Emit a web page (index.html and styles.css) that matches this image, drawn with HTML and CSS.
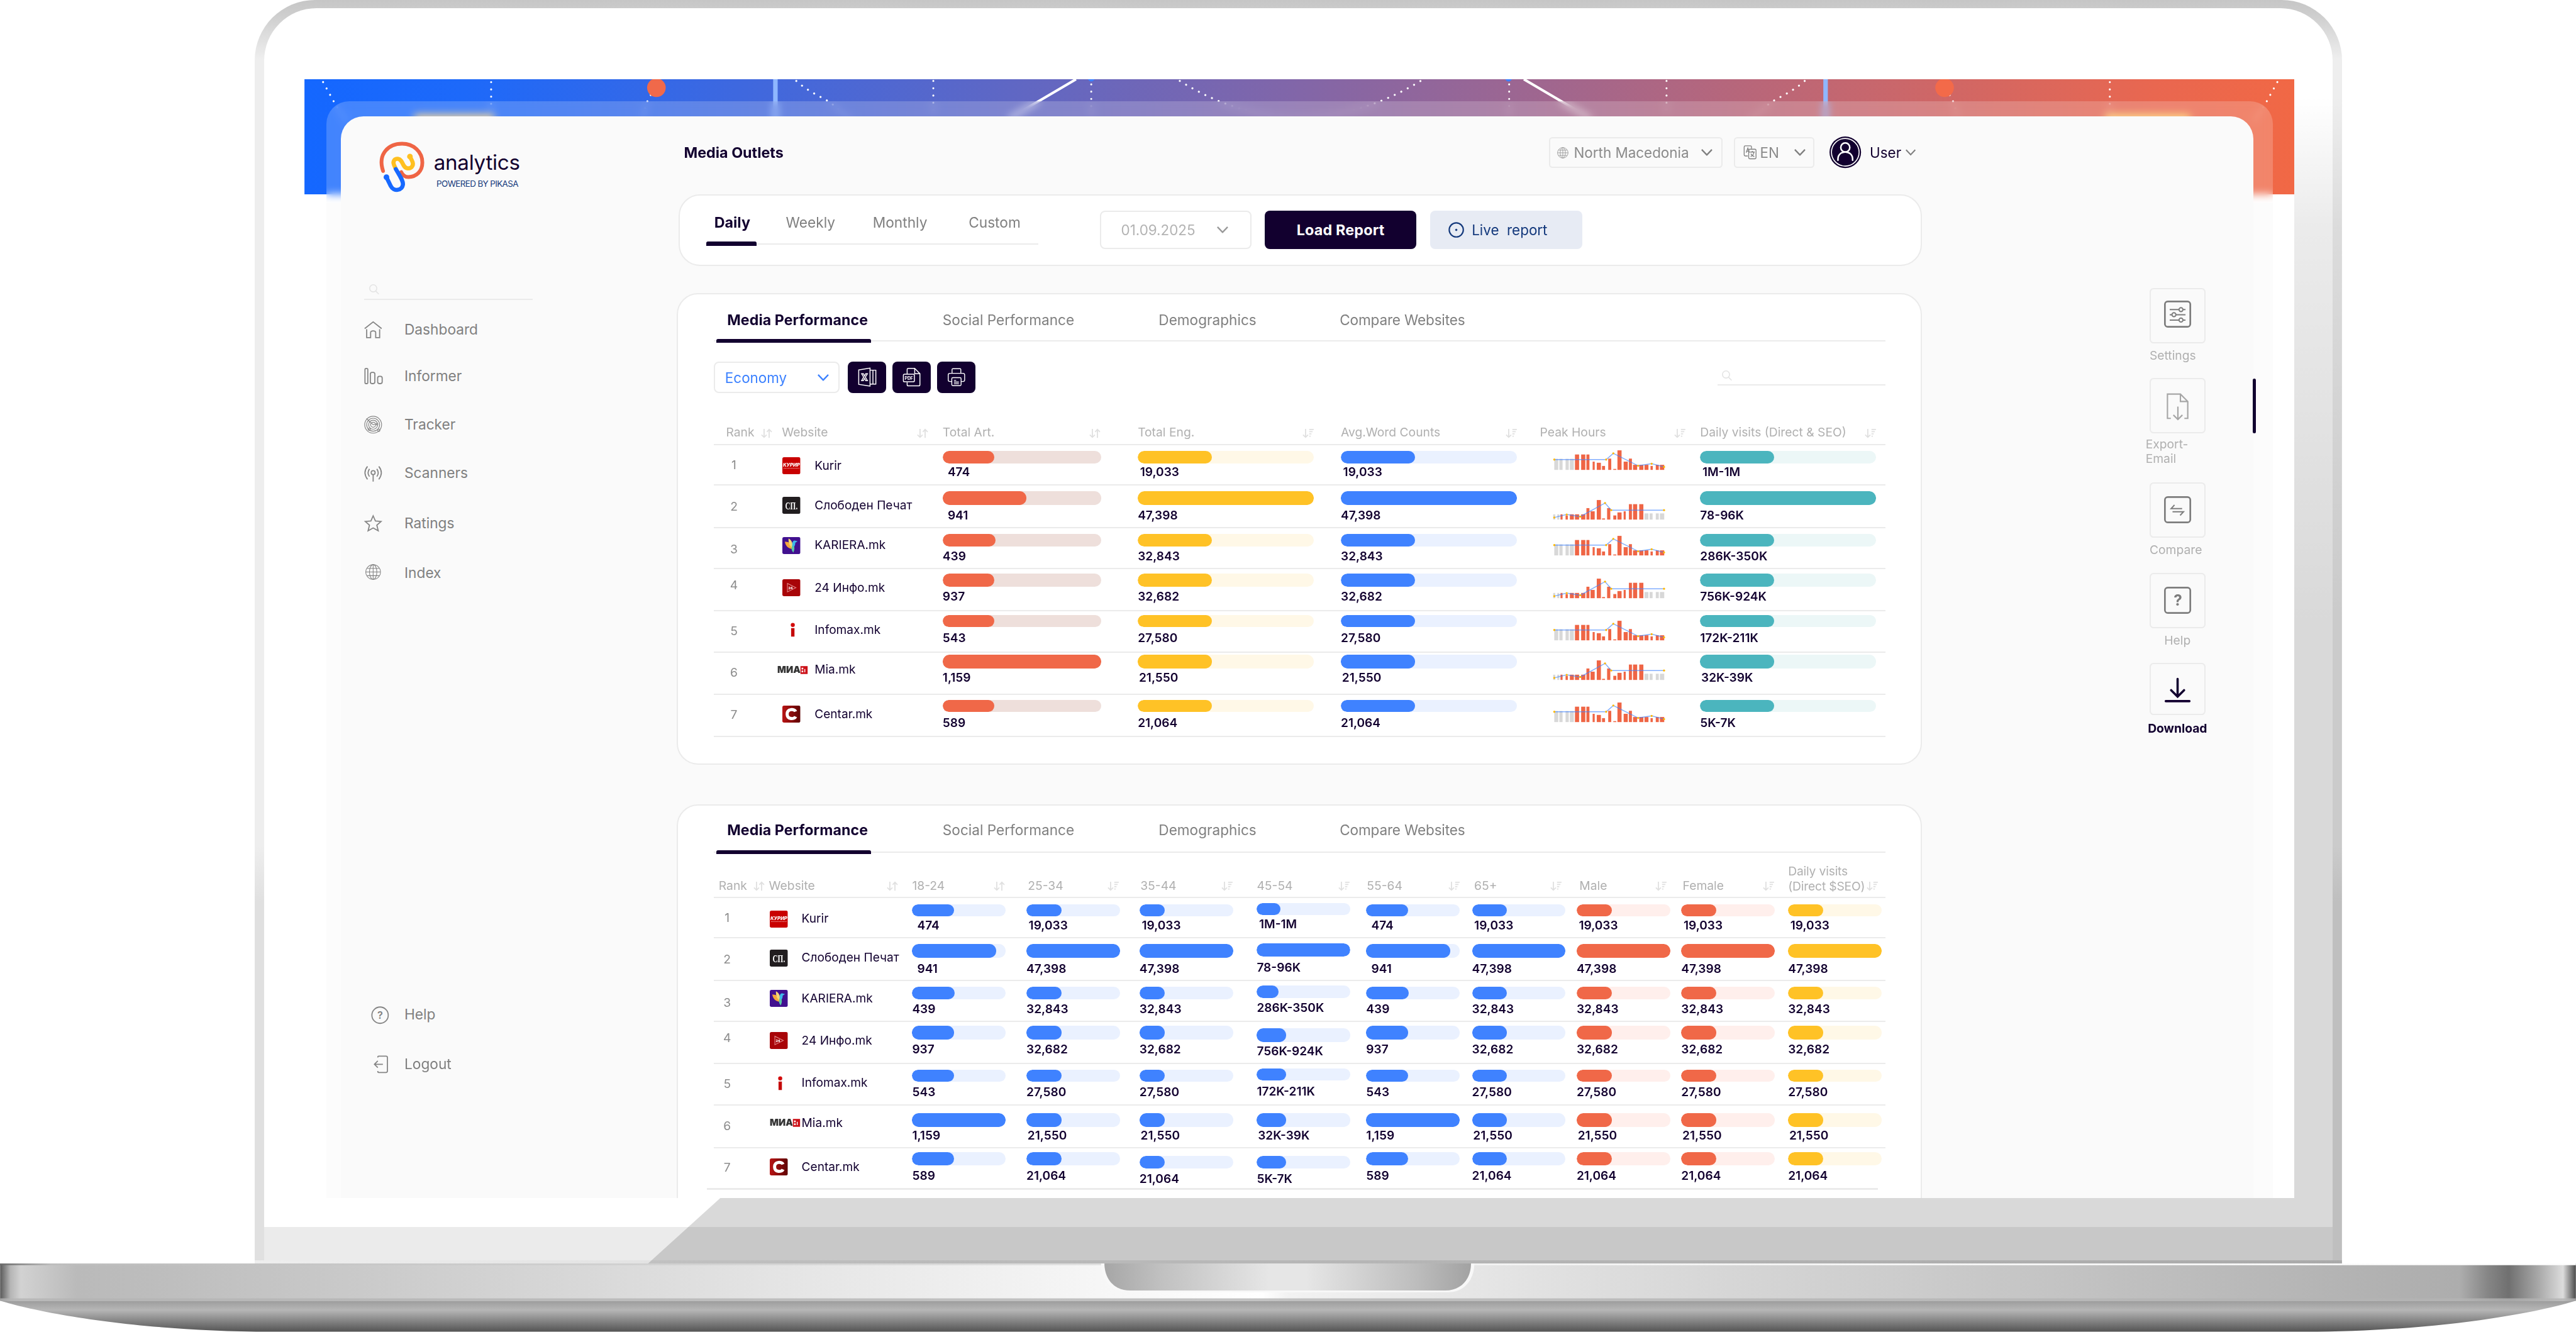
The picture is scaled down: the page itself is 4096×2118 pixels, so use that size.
FILE: index.html
```html
<!DOCTYPE html>
<html lang="en">
<head>
<meta charset="utf-8">
<title>Analytics – Media Outlets</title>
<link rel="stylesheet" href="styles.css">
</head>
<body>
<svg class="defs" aria-hidden="true">
  <defs>
    <linearGradient id="cgrad" x1="0" x2="1"><stop offset="0" stop-color="#b81414"/><stop offset="1" stop-color="#5e0404"/></linearGradient>
  </defs>
  <symbol id="sort" viewBox="0 0 20 18"><path d="M5.5 1v15M1 11.5 5.5 16 10 11.500M14.500 17V2M10.500 6.500 14.500 2 19 6.500"/></symbol>
  <symbol id="sort-desc" viewBox="0 0 20 18"><path d="M5.500 1v15M1 11.500 5.500 16 10 11.500M12 2h8M12 6h6M12 10h4M12 14h2.500"/></symbol>
  <symbol id="chev" viewBox="0 0 20 12"><path d="M1 1l9 9.500L19 1"/></symbol>
  <symbol id="search" viewBox="0 0 20 20"><circle cx="8" cy="8" r="7"/><path d="M13 13.500 19 19.500"/></symbol>
  <symbol id="globe" viewBox="0 0 30 30"><circle cx="15" cy="15" r="14"/><ellipse cx="15" cy="15" rx="7" ry="14"/><path d="M15 1v28M1 15h28M3.500 8h23M3.500 22h23"/></symbol>
  <symbol id="kurir" viewBox="0 0 32 30"><rect width="32" height="30" rx="3" fill="#c90000"/><text x="16" y="16.500" textLength="30" lengthAdjust="spacingAndGlyphs" class="lt-kurir">КУРИР</text><path d="M2 19.500h28" stroke="#e88f8f" stroke-width="1.200" stroke-dasharray="2 .7"/></symbol>
  <symbol id="pecat" viewBox="0 0 32 30"><rect width="32" height="30" rx="3" fill="#211d1f"/><text x="16" y="22" textLength="22" lengthAdjust="spacingAndGlyphs" class="lt-pecat">СП.</text></symbol>
  <symbol id="kariera" viewBox="0 0 32 30"><rect width="32" height="30" rx="3" fill="#41108f"/><path d="M4.500 8l6 1 6 6 1 6c-7-1-12-5-13-13z" fill="#f5a83d"/><path d="M11 2.500c4 2 7 6 7.500 13l-2 3c-4-4-6-9-5.500-16z" fill="#f7d774"/><path d="M17.500 11c1-4 3-5.500 5.500-4.500l4 1-4 2.500c0 5-2 8-5.500 10z" fill="#3fb8e8"/><path d="M17 15l4 2c1 4 0 7-1.500 10.500C17 25 16 22 16.500 19z" fill="#57c7a5"/></symbol>
  <symbol id="info24" viewBox="0 0 32 30"><rect width="32" height="30" rx="3" fill="#a80508"/><path d="M9 7.500v15L24 15z" fill="none" stroke="#e58a8a" stroke-width="1.200"/><text x="14.500" y="17.500" class="lt-24">24</text></symbol>
  <symbol id="infomax" viewBox="0 0 32 30"><circle cx="18.500" cy="6.500" r="3.600" fill="#d30b0b"/><path d="M15.500 12h6v15h-6z" fill="#c50909"/></symbol>
  <symbol id="mia" viewBox="0 0 54 30"><text x="0" y="20.500" textLength="41" lengthAdjust="spacingAndGlyphs" class="lt-mia">МИА</text><rect x="41" y="8" width="13" height="14" fill="#cc1118"/><path d="M43 11h3v3h-3zM43 16h3v3h-3zM48 13h1.500v6H48z" fill="#fff"/></symbol>
  <symbol id="centar" viewBox="0 0 32 30"><rect width="32" height="30" rx="3" fill="url(#cgrad)"/><path d="M23.500 10.500c-2-5-15-5.500-15 4.500s13 9.500 15 4.500" fill="none" stroke="#fff" stroke-width="5.500"/></symbol>
</svg>

<div class="stage">
  <div class="lid">
    <div class="lid-face"><div class="chin"></div></div>
    <div class="hinge"></div>
    <div class="shade"></div>
  </div>

  <div class="screen">
    <svg class="band" viewBox="540 140 3528 205">
      <defs><linearGradient id="bandg" x1="0" x2="1"><stop offset="0" stop-color="#1467ff"/><stop offset=".08" stop-color="#1d69fa"/><stop offset=".5" stop-color="#8266a8"/><stop offset=".93" stop-color="#e96750"/><stop offset="1" stop-color="#f16845"/></linearGradient></defs>
      <rect x="540" y="140" width="3528" height="205" fill="url(#bandg)"/>
      <g stroke="#8fb7ff" stroke-width="8"><path d="M1375 140v205M3237 140v205"/></g>
      <g stroke="#fff" stroke-width="4.500" fill="none"><path d="M1908 140 1789 210M2702 140l119 70"/></g>
      <g class="dots">
        <path d="M573 145l22 40 20 30"/><path d="M871 145v60"/><path d="M1154 168c-6 9-10 20-14 42"/>
        <path d="M1412 143c20 18 40 26 60 38l40 34"/><path d="M1655 143v62"/><path d="M1935 149v56"/>
        <path d="M2092 143q105 65 212 65t215-65"/><path d="M2676 149v56"/><path d="M2955 143v62"/>
        <path d="M3200 143c-20 18-40 26-60 38l-40 34"/><path d="M3457 168c6 9 10 20 14 42"/><path d="M3741 145v60"/><path d="M4038 145l-22 40-20 30"/>
      </g>
      <circle cx="1935" cy="138" r="6" fill="#3d82ff"/><circle cx="2675" cy="138" r="6" fill="#3d82ff"/>
      <circle cx="1164" cy="155" r="16.500" fill="#f0694a"/><circle cx="3448" cy="155" r="16.500" fill="#f36a49"/>
      <rect x="735" y="202" width="141" height="24" fill="#e8c98a"/><rect x="3733" y="202" width="150" height="24" fill="#ffcf6a"/>
    </svg>
    <div class="glass"></div>

    <div class="app">
      <aside class="sidebar">
        <div class="brand">
          <svg class="brand-mark" viewBox="42 48 240 276">
            <path d="M59 205C28 110 92 60 160 60c62 0 108 43 108 100 0 46-32 77-74 77q-26 0-38-26" class="ring"/>
            <path d="M125 190l-8-18c-8-20 4-34 21-32 30 5 22 50 54 51 23 0 32-21 21-41l-11-22" class="squig"/><circle cx="202" cy="128" r="15" fill="#ffc020"/>
            <path d="M77 238l23 47c15 30 62 27 65-10 0-20-12-36-38-80" class="hook"/><circle cx="77" cy="238" r="15" fill="#1769ff"/>
          </svg>
          <div class="brand-text"><div class="brand-name">analytics</div><div class="brand-sub">POWERED BY PIKASA</div></div>
        </div>
        <div class="side-search"><svg class="ic-search"><use href="#search"/></svg></div>
        <nav class="side-nav">
          <a><svg viewBox="0 0 32 32"><path d="M1 14 16 2l15 12M4.500 15v15h7V21q0-3 4.500-3t4.500 3v9h7V15"/></svg>Dashboard</a>
          <a><svg viewBox="0 0 32 32"><rect x="1.500" y="2" width="5" height="27" rx="2"/><rect x="11" y="9" width="8" height="20" rx="3"/><rect x="24" y="16" width="8" height="13" rx="3"/></svg>Informer</a>
          <a><svg viewBox="0 0 32 32" class="thin"><circle cx="16" cy="16" r="15"/><circle cx="16" cy="16" r="11.500"/><circle cx="16" cy="16" r="8"/><circle cx="16" cy="16" r="4.500"/><path d="M4 5l12 11 4-1"/><circle cx="9" cy="24" r="2"/><circle cx="26" cy="26" r="2"/><circle cx="23" cy="15" r="1.500"/></svg>Tracker</a>
          <a><svg viewBox="0 0 32 32"><circle cx="16" cy="15" r="3.500"/><path d="M16 19v12M9.500 8.500q-5 7 0 13.500M22.500 8.500q5 7 0 13.500M6 4q-9 11 0 23M26 4q9 11 0 23"/></svg>Scanners</a>
          <a><svg viewBox="0 0 32 32"><path d="M16 2.500l4 9 10 1-7.500 6.500 2.500 10-9-5-9 5 2.500-10L2 12.500l10-1z"/></svg>Ratings</a>
          <a><svg viewBox="-1 0 32 32" class="thin"><use href="#globe" width="28" height="28" x="1" y="0"/></svg>Index</a>
        </nav>
        <nav class="side-foot">
          <a><svg viewBox="0 0 32 32"><circle cx="16" cy="17" r="14.500"/><text x="16" y="23.500" class="q">?</text></svg>Help</a>
          <a><svg viewBox="0 0 32 32"><path d="M12 4V3q0-1.500 1.500-1.500h13Q29 1.500 29 4v24q0 2.500-2.500 2.500h-13Q12 30.500 12 29v-1M6 16h15M12 10l-6 6 6 6"/></svg>Logout</a>
        </nav>
      </aside>

      <main class="main">
        <header class="topbar">
          <h1>Media Outlets</h1>
          <div class="pick pick-country"><svg class="g"><use href="#globe"/></svg><span>North Macedonia</span><svg class="chev"><use href="#chev"/></svg></div>
          <div class="pick pick-lang"><svg class="lang" viewBox="0 0 24 26"><path d="M1.500 3q0-2 2-2h9q2 0 2 2v3M8 19H3.500q-2 0-2-2V3M5 13l3-8 3 8M6 10.500h4"/><rect x="9.500" y="7" width="13" height="17" rx="2"/><path d="M12 12h8M16 10v2M19 12q-1 6-6 8M13.500 15q2 4 6 5"/></svg><span>EN</span><svg class="chev"><use href="#chev"/></svg></div>
          <svg class="avatar" viewBox="0 0 56 56"><circle cx="28" cy="28" r="28" fill="#12002f"/><circle cx="28" cy="28" r="24.500" fill="none" stroke="#fff" stroke-width="1.800"/><circle cx="28" cy="19.500" r="8" class="ln"/><path d="M15 42v-2c0-8 6-12.500 13-12.500S41 32 41 40v2" class="ln"/></svg>
          <span class="user">User</span><svg class="chev chev-user"><use href="#chev"/></svg>
        </header>

        <section class="filters">
          <nav class="periods"><b>Daily</b><span>Weekly</span><span>Monthly</span><span>Custom</span></nav>
          <div class="date"><span>01.09.2025</span><svg class="chev"><use href="#chev"/></svg></div>
          <button class="load">Load Report</button>
          <button class="live"><svg viewBox="0 0 28 28"><circle cx="14" cy="14" r="12.500"/><circle cx="14" cy="14" r="1.500" class="pt"/></svg>Live&nbsp; report</button>
        </section>

        <section class="card performance">
          <nav class="tabs"><b>Media Performance</b><span>Social Performance</span><span>Demographics</span><span>Compare Websites</span></nav>
          <div class="toolbar">
            <div class="topic"><span>Economy</span><svg class="chev"><use href="#chev"/></svg></div>
            <button class="tool"><svg viewBox="0 0 32 34"><path d="M1.500 4.500 21 1.500v31L1.500 29.500zM21 5h10v24H21M26 5v24"/><path d="M6.500 11h3l2 4 2-4h3l-3.500 6 3.500 6h-3l-2-4-2 4h-3l3.500-6z"/></svg></button>
            <button class="tool"><svg viewBox="0 0 32 34"><path d="M8 12V4q0-2 2-2h11l9 9v19q0 2-2 2H10q-2 0-2-2v-4M21 2v9h9"/><rect x="1.500" y="12" width="19" height="13" rx="2" fill="#12002f"/><text x="11" y="21.500" class="pdf">PDF</text></svg></button>
            <button class="tool"><svg viewBox="0 0 34 34"><path d="M9 10V3q0-1.500 1.500-1.500h13Q25 1.500 25 3v7M8.500 25H5q-3 0-3-3v-9q0-3 3-3h24q3 0 3 3v9q0 3-3 3h-3.500"/><rect x="8.500" y="18" width="17" height="14.500" rx="2"/><path d="M12.500 23h4M12.500 26h9M12.500 29h9"/></svg></button>
            <div class="table-search"><svg class="ic-search"><use href="#search"/></svg></div>
          </div>
          <div class="table" id="performance"></div>
        </section>

        <section class="card demographics">
          <nav class="tabs"><b>Media Performance</b><span>Social Performance</span><span>Demographics</span><span>Compare Websites</span></nav>
          <div class="table" id="demographics"></div>
        </section>
      </main>

      <aside class="rail">
        <div class="act"><i><svg viewBox="0 0 48 48"><rect x="1.500" y="1.500" width="45" height="45" rx="5" class="fr"/><path d="M10 16h16M34 16h4M10 25h4M21 25h17M10 34.500h16M34 34.500h4" class="fr2"/><circle cx="30" cy="16" r="3.500" class="fr2"/><circle cx="17.500" cy="25" r="3.500" class="fr2"/><circle cx="30" cy="34.500" r="3.500" class="fr2"/></svg></i>Settings</div>
        <div class="act exp"><i><svg viewBox="0 0 48 48"><path d="M12 46H6V3h23l13 13v30h-6M29 3v13h13M24.500 25v23M16.500 40l8 8 8-8" class="dl"/></svg></i>Export-<br>Email</div>
        <div class="act"><i><svg viewBox="0 0 48 48"><rect x="1.500" y="1.500" width="45" height="45" rx="5" class="fr"/><path d="M32 22H12.500l6-6.500M15 27.500h19.500l-6 6.500" class="fr2"/></svg></i>Compare</div>
        <div class="act mid"><i><svg viewBox="0 0 48 48"><rect x="1.500" y="1.500" width="45" height="45" rx="5" class="fr"/><text x="24.500" y="34" class="qq">?</text></svg></i>Help</div>
        <div class="act mid on"><i><svg viewBox="0 0 48 48"><path d="M24 5v31M12.500 25 24 36.500 35.500 25M3 44.500h42" class="dk"/></svg></i>Download</div>
        <div class="marker"></div>
      </aside>
    </div>
  </div>

  <svg class="base" viewBox="0 0 4567 122">
    <defs>
      <linearGradient id="deck" x1="0" x2="1"><stop offset="0" stop-color="#5a5a5a"/><stop offset=".004" stop-color="#b5b5b5"/><stop offset=".008" stop-color="#d2d2d2"/><stop offset=".03" stop-color="#bababa"/><stop offset=".06" stop-color="#bdbdbd"/><stop offset=".3" stop-color="#e4e4e4"/><stop offset=".49" stop-color="#fff"/><stop offset=".5" stop-color="#f2f2f2"/><stop offset=".63" stop-color="#dcdcdc"/><stop offset=".955" stop-color="#adadad"/><stop offset=".966" stop-color="#858585"/><stop offset=".974" stop-color="#707070"/><stop offset=".985" stop-color="#a6a6a6"/><stop offset=".995" stop-color="#dcdcdc"/><stop offset="1" stop-color="#4a4a4a"/></linearGradient>
      <linearGradient id="under" x2="0" y2="1"><stop offset="0" stop-color="#9c9c9c"/><stop offset=".3" stop-color="#b6b6b6"/><stop offset=".65" stop-color="#858585"/><stop offset="1" stop-color="#545454"/></linearGradient>
      <linearGradient id="notch" x1="0" x2="1"><stop offset="0" stop-color="#a6a6a6"/><stop offset=".15" stop-color="#c0c0c0"/><stop offset=".45" stop-color="#e6e6e6"/><stop offset=".55" stop-color="#e6e6e6"/><stop offset=".85" stop-color="#bdbdbd"/><stop offset="1" stop-color="#a2a2a2"/></linearGradient>
      <linearGradient id="lip" x1="0" x2="1"><stop offset="0" stop-color="#6b6b6b"/><stop offset=".02" stop-color="#bdbdbd"/><stop offset=".42" stop-color="#dedede"/><stop offset=".58" stop-color="#f4f4f4"/><stop offset="1" stop-color="#fdfdfd"/></linearGradient>
    </defs>
    <path d="M0 66C70 88 250 121 480 121H4087C4317 121 4497 88 4567 66z" fill="url(#under)"/>
    <path d="M0 0h4567v66H0z" fill="url(#deck)"/>
    <path d="M0 0h4567v3H0z" fill="url(#lip)"/>
    <path d="M0 62h4567v4H0z" fill="#b4b4b4" opacity=".8"/>
    <path d="M1952 0h662c0 26-16 51-46 51H1998c-30 0-46-25-46-51z" fill="#f8f8f8"/>
    <path d="M1958 0h650c0 24-14 48-46 48H2004c-32 0-46-24-46-48z" fill="url(#notch)"/>
  </svg>
</div>
<script src="tables.js"></script>
</body>
</html>
```
FILE: styles.css
```css
*{box-sizing:border-box}
html,body{margin:0;height:100%;overflow:hidden;background:#fff}
body{font-family:Inter,"Noto Sans",sans-serif;color:#12002f}
h1,button{margin:0;padding:0;border:0;font:inherit}
svg{display:block;fill:none;overflow:visible;flex:none}
.defs{position:absolute;width:0;height:0;overflow:hidden}

/* laptop */
.stage{position:relative;width:4567px;height:2362px;zoom:.896869;overflow:hidden}
.lid{position:absolute;left:452px;top:0;width:3700px;height:2240px;border-radius:107px 107px 0 0;overflow:hidden;background:linear-gradient(#c6c6c6,#cdcdcd 25px,#dcdcdc 60px,#eee 105px,#eee 1500px,#e0e0e0 1600px)}
.lid-face{margin:14.5px 16px 0;height:2219.5px;border-radius:93px 93px 0 0;background:#fff;display:flex;flex-direction:column;justify-content:flex-end;overflow:hidden}
.chin{height:59px;background:#ebebeb}
.hinge{height:6px;background:linear-gradient(90deg,#eee,#dcdcdc 30%,#c8c8c8)}
.shade{position:absolute;inset:0;clip-path:polygon(697px 2240px,825px 2124px,3169px 0,3700px 0,3700px 2240px);background:linear-gradient(transparent 170px,rgba(0,0,0,.08) 400px,rgba(0,0,0,.15) 1100px)}
.base{position:absolute;left:0;top:2240px;width:4567px;height:122px}

/* screen */
.screen{position:absolute;left:540px;top:140px;width:3528px;height:1984px;background:#fff;overflow:hidden}
.band{position:absolute;left:0;top:0;width:3528px;height:205px;overflow:hidden}
.dots path{stroke:#fff;stroke-width:3.5;stroke-linecap:round;stroke-dasharray:.1 12.8}
.glass{position:absolute;left:38.5px;top:40px;width:3451px;height:2000px;border-radius:40px 40px 0 0;background:rgba(250,250,250,.2);backdrop-filter:blur(7px)}
.glass::after{content:"";position:absolute;inset:180px 0 0;background:#fcfcfc}
.app{position:relative;margin:66px 0 0 64px;width:3391px;height:1930px;border-radius:40px 40px 0 0;background:#fafafa;display:grid;grid-template-columns:595.600px 2207.400px 1fr}

/* sidebar */
.sidebar{padding:45px 0 0 42px}
.brand{display:flex;height:92px;margin-left:28px}
.brand-mark{width:80px;height:92px}
.ring,.squig,.hook{stroke-width:20;stroke-linecap:round}
.ring{stroke:#ef6545}.squig{stroke:#ffc020}.hook{stroke:#1769ff}
.squig,.hook{stroke-width:22}
.brand-text{margin:18px 0 0 15px}
.brand-name{font-size:37px;line-height:40px;letter-spacing:-.3px}
.brand-sub{font-size:15px;line-height:18px;margin:8px 0 0 5px;color:#14397c;letter-spacing:-.7px;white-space:nowrap}
.side-search,.table-search{width:298px;height:31px;border-bottom:3px solid #ebebeb}
.side-search{margin-top:157.500px;padding:3px 8px}
.ic-search{width:18px;height:18px;stroke:#e4e4e4;stroke-width:2}
.side-nav{display:grid;grid-template-rows:82px 86.500px 86px 89px 87.600px 30px;margin-top:38.500px}
.side-nav a,.side-foot a{display:flex;align-items:center;height:30px;gap:39px;font-size:25.300px;line-height:30px;color:#808080}
.side-nav svg,.side-foot svg{width:32px;height:32px;stroke:#858585;stroke-width:2}
.side-nav svg.thin{stroke-width:1.300}
.side-foot{margin-top:753px;display:grid;grid-template-rows:88px 30px}
.side-foot a{padding-left:12px;gap:27px}
.q{font:600 18px Inter,sans-serif;fill:#808080;stroke:none;text-anchor:middle}

/* header */
.topbar{height:129px;margin-bottom:10px;display:flex;align-items:center;padding:0 11px 0 13px}
h1{font-size:26px;font-weight:700;flex:1}
.pick{display:flex;align-items:center;height:55px;border:3px solid #ebebeb;border-radius:6px;font-size:25px;color:#8a8a8a}
.pick-country{width:308px;padding:0 16px 0 13px}
.pick-country .g{width:20px;height:20px;stroke:#999;stroke-width:1.500}
.pick-country span{flex:1;margin-left:9px}
.pick-lang{width:143px;margin-left:20px;padding:0 14px}
.pick-lang span{flex:1;margin-left:6px}
.lang{width:24px;height:26px;stroke:#808080;stroke-width:1.500}
.chev{width:20px;height:12px;stroke:#808080;stroke-width:2.600}
.avatar{width:56px;height:56px;margin-left:26px}
.ln{stroke:#fff;stroke-width:2.800;stroke-linecap:round}
.user{width:54px;margin:0 9px 0 16px;font-size:25px}
.chev-user{width:18px}

/* filters */
.filters{height:127px;margin-left:3px;border:3px solid #ebebeb;border-radius:38px;background:#fff;display:flex;padding:26.500px 0 0 47.500px}
.periods{width:589px;height:60px;border-bottom:3px solid #ebebeb;display:grid;grid-template-columns:141px 154px 170px auto;font-size:25.300px;line-height:30px;color:#808080;padding-top:6px;position:relative}
.periods b,.tabs b{color:#12002f}
.periods b{padding-left:14px;font-size:26px}
.periods b::after{content:"";position:absolute;left:0;bottom:-4px;width:89px;height:7px;border-radius:3px 3px 0 0;background:#12002f}
.filters>.date,.filters>button{height:68px;border-radius:9px;font-size:25px}
.date{width:269px;margin-left:109px;border:3px solid #ebebeb;display:flex;align-items:center;padding:0 40px 0 35px;color:#b3b3b3}
.date span{flex:1}
.date .chev{stroke:#999}
.filters>.load{width:269px;margin-left:23px;background:#12002f;color:#fff;font-weight:700;font-size:26px;letter-spacing:.2px}
.live{width:270px;margin-left:24px;background:#e7ebf4;color:#14397c;display:flex;align-items:center;padding-left:33px;gap:13px}
.live svg{width:28px;height:28px;stroke:#14397c;stroke-width:2.400}
.live .pt{fill:#14397c;stroke-width:1}

/* cards */
.card{border:3px solid #ebebeb;border-radius:38px;background:#fff;padding:0 62px 0 63.400px}
.performance{height:836px;margin-top:48px}
.demographics{height:760px;margin-top:70px}
.tabs{position:relative;height:83.500px;border-bottom:3px solid #ebebeb;padding-top:31px;display:grid;grid-template-columns:406px 383px 321px auto;font-size:25.200px;line-height:30px;color:#808080}
.demographics .tabs{height:84px;padding-top:29.600px}
.tabs b{padding-left:24px;font-size:25.800px;letter-spacing:.1px;white-space:nowrap}
.tabs span:last-child{letter-spacing:-.2px}
.tabs b::after{content:"";position:absolute;left:5px;bottom:-4px;width:274px;height:6px;border-radius:3px 3px 0 0;background:#12002f}
.toolbar{display:flex;height:56px;margin-top:35.500px}
.topic{width:223px;border:3px solid #ebebeb;border-radius:9px;display:flex;align-items:center;padding:0 17px 0 18px;font-size:25px;color:#3d82ff;margin-right:4px}
.topic span{flex:1}
.topic .chev{stroke:#3d82ff}
.tool{width:68px;height:56px;border-radius:9px;background:#12002f;display:flex;align-items:center;justify-content:center;margin-left:11px}
.tool svg{width:33px;height:35px;stroke:#fff;stroke-width:1.600}
.pdf{font:700 7.500px Inter,sans-serif;fill:#fff;stroke:none;text-anchor:middle}
.table-search{margin:11px 0 0 auto;padding:5px 8px}
.toolbar .table-search{height:31px}

/* tables */
.head,.row{display:grid;border-bottom:3px solid #ebebeb}
.performance .head,.performance .row{grid-template-columns:121px 285px 346px 360px 353px 284px 327px}
.demographics .head,.demographics .row{grid-template-columns:98px 254px 202.500px 200.500px 208px 194px 187.500px 185.500px 185.600px 189.400px 171px}
.head{height:92.500px;padding-bottom:9px;align-items:end;font-size:21.500px;line-height:22px;color:#b0b0b0;white-space:nowrap}
.demographics .head{height:80.500px}
.head div{display:flex;justify-content:space-between;align-items:flex-end}
.head svg{width:20px;height:18px;stroke:#e0e0e0;stroke-width:2;margin-bottom:1px}
.head .two{line-height:26px;margin-bottom:-3px;width:136px;letter-spacing:-.2px}
.performance .head div:nth-child(1){padding:0 17px 0 22px}
.performance .head div:nth-child(2){padding-right:26px}
.performance .head div:nth-child(3){padding-right:66px}
.performance .head div:nth-child(4){padding-right:48px}
.performance .head div:nth-child(5){padding-right:41px}
.performance .head div:nth-child(6){padding-right:26px}
.performance .head div:nth-child(7){padding-right:15px}
.demographics .head div:nth-child(1){padding:0 7px 0 9px}
.demographics .head div:nth-child(2){padding-right:25px}
.demographics .head div:nth-child(3){padding-right:37.500px}
.demographics .head div:nth-child(4){padding:0 37px 0 2.500px}
.demographics .head div:nth-child(5){padding:0 43px 0 1.500px}
.demographics .head div:nth-child(6){padding-right:29px}
.demographics .head div:nth-child(7){padding:0 22px 0 1px}
.demographics .head div:nth-child(8){padding:0 27px 0 4px}
.demographics .head div:nth-child(9){padding:0 26px 0 5px}
.demographics .head div:nth-child(10){padding:0 24.600px 0 2.500px}
.demographics .head div:nth-child(11){padding-right:12px}

.rank{width:72px;text-align:center;padding-top:var(--rank);font-size:21.500px;line-height:22px;color:#8c8c8c}
.demographics .rank{width:48px}
.site{display:flex;align-items:center;height:30px;margin:calc(var(--name) - 3.500px) 0 0 1px;font-size:21.300px;line-height:22px;white-space:nowrap}
.site svg{width:32px;height:30px;margin-right:25px}
.site svg.wide{width:54px;margin:0 12px 0 -9px}
.demographics .site svg.wide{margin:0 2px 0 1px}
.cell{padding-top:var(--bar)}
.bar{width:312px;height:var(--thick);border-radius:12px;overflow:hidden}
.bar i{display:block;height:100%;border-radius:12px}
.num{margin-top:var(--gap);font-size:21.300px;line-height:22.500px;font-weight:600}
.n2{padding-left:2px}.n4{padding-left:4px}.n9{padding-left:9px}
.art .bar{width:281px}
.demographics .bar{width:166px}
.red .bar{background:#ffefec}.art .bar{background:#eedfdb}
.red i,.art i{background:#f06848}
.yel .bar{background:#fff8e7}.yel i{background:#ffc226}
.blu .bar{background:#eaf1ff}.blu i{background:#3f82ff}
.teal .bar{background:#ecf7f7}.teal i{background:#4bb5be}
.spark{width:200px;height:37px;margin:var(--spark) 0 0 22.300px}
.spark .g{fill:#d8d8d8}.spark .o{fill:#ef6545}
.spark polyline{stroke:#3f82ff;stroke-opacity:.65;stroke-width:5}
.spark circle{fill:#ffb800}

.row:nth-child(2){height:71.500px;--bar:10.200px;--thick:22px;--gap:3.700px;--rank:24.200px;--name:24.900px;--spark:6px}
.row:nth-child(3){height:75.500px;--bar:10px;--thick:24px;--gap:7.400px;--rank:26.700px;--name:23.400px;--spark:22.700px}
.row:nth-child(4){height:72px;--bar:10px;--thick:22px;--gap:5.500px;--rank:27.200px;--name:18.900px;--spark:11.500px}
.row:nth-child(5){height:75px;--bar:8.200px;--thick:23.500px;--gap:5.400px;--rank:18.200px;--name:21.900px;--spark:15.200px}
.row:nth-child(6){height:73.500px;--bar:6.500px;--thick:21.500px;--gap:7.900px;--rank:24.200px;--name:21.900px;--spark:15px}
.row:nth-child(7){height:75.500px;--bar:4px;--thick:24px;--gap:4.400px;--rank:24.700px;--name:19px;--spark:11.500px}
.row:nth-child(8){height:74px;--bar:8px;--thick:21.500px;--gap:8.400px;--rank:24.200px;--name:21.900px;--spark:11.200px}
.demographics .row:nth-child(2){height:71px}
.demographics .row:nth-child(3){height:76px;--bar:10.500px}
.demographics .row:nth-child(5){--bar:7.500px;--thick:24px}
.demographics .row:nth-child(6){height:74px;--bar:9.500px;--gap:7.400px}
.demographics .row:nth-child(7){height:75px;--bar:13px;--gap:3.400px}
.demographics .row:nth-child(8){height:73px;--bar:7.500px;--thick:22.500px;--gap:6.900px;position:relative;border-color:transparent}
.demographics .row:nth-child(8)::after{content:"";position:absolute;left:-12px;right:13px;bottom:-3px;height:3px;background:#ebebeb}
.demographics .cell:nth-child(6){margin-top:-2px}
.demographics .row:nth-child(5) .cell:nth-child(6){margin-top:4px}
.demographics .row:nth-child(7) .cell:nth-child(6){margin-top:0}
.demographics .row:nth-child(8) .cell:nth-child(5),.demographics .row:nth-child(8) .cell:nth-child(6){margin-top:6px}

.lt-kurir{font:italic 800 9px Inter,sans-serif;fill:#fff;text-anchor:middle}
.lt-pecat{font:700 19px "Liberation Serif",serif;fill:#fff;text-anchor:middle}
.lt-24{font:800 6px Inter,sans-serif;fill:#fff;text-anchor:middle}
.lt-mia{font:900 17px Inter,sans-serif;fill:#333}

/* action rail */
.rail{position:relative;padding:304.500px 0 0 404px;display:grid;grid-template-rows:159.500px 185px 160.500px 160px 130px;font-size:21.500px;line-height:26px;color:#b0b0b0}
.act{width:99px;white-space:nowrap}
.act i{display:flex;align-items:center;justify-content:center;width:99px;height:98px;margin-bottom:9px;border:3px solid #ebebeb;border-radius:7px}
.act svg{width:48px;height:48px;margin-top:-6px}
.act:nth-child(3) svg,.act:nth-child(4) svg{margin-top:0}
.exp{margin-left:-7px}.act.exp i{margin:0 0 7px 7px}.exp svg,.on svg{margin-top:2px}
.mid{display:flex;flex-direction:column;align-items:center}
.on{color:#12002f;font-weight:700}
.act.on i{margin-bottom:12px}
.fr{stroke:#7d7d7d;stroke-width:3}.fr2{stroke:#7d7d7d;stroke-width:2.200}
.dl{stroke:#a6a6a6;stroke-width:2.400}
.dk{stroke:#12002f;stroke-width:4;stroke-linecap:round}
.qq{font:700 27px Inter,sans-serif;fill:#7d7d7d;text-anchor:middle}
.marker{position:absolute;right:-5px;top:465px;width:6px;height:97px;border-radius:3px;background:#12002f}
```
FILE: tables.js
```js
const sites = [
  ['kurir', 'Kurir'], ['pecat', 'Слободен Печат'], ['kariera', 'KARIERA.mk'], ['info24', '24 Инфо.mk'],
  ['infomax', 'Infomax.mk'], ['mia', 'Mia.mk'], ['centar', 'Centar.mk']
];
const articles = ['474', '941', '439', '937', '543', '1,159', '589'];
const counts = ['19,033', '47,398', '32,843', '32,682', '27,580', '21,550', '21,064'];
const visits = ['1M-1M', '78-96K', '286K-350K', '756K-924K', '172K-211K', '32K-39K', '5K-7K'];

// share of the track that is filled, one value per site
const fill = (base, over = {}) => sites.map((_, i) => over[i] ?? base);
const wide = fill(42.2, { 1: 100 });
const slim = fill(37.6, { 1: 100 });

const columns = {
  performance: [
    ['Total Art.', 'art', articles, fill(32.6, { 1: 53, 2: 33.3, 5: 100 })],
    ['Total Eng.', 'yel', counts, wide],
    ['Avg.Word Counts', 'blu', counts, wide],
    ['Peak Hours', 'spark'],
    ['Daily visits (Direct &amp; SEO)', 'teal', visits, wide]
  ],
  demographics: [
    ['18-24', 'blu', articles, fill(44.5, { 1: 90, 2: 45.5, 5: 100 })],
    ['25-34', 'blu', counts, slim],
    ['35-44', 'blu', counts, fill(26.7, { 1: 100 })],
    ['45-54', 'blu', visits, fill(31, { 0: 25.500, 1: 100, 2: 23 })],
    ['55-64', 'blu', articles, fill(44.5, { 1: 90, 2: 45.5, 5: 100 })],
    ['65+', 'blu', counts, slim],
    ['Male', 'red', counts, slim],
    ['Female', 'red', counts, slim],
    ['Daily visits<br>(Direct $SEO)', 'yel', counts, slim]
  ]
};

// [left, right, top, isQuietHour]
const hoursA = [[168,189,98,1],[195,212,98,1],[228,245,98,1],[251,272,98,1],[278,300,75],[311,333,75],[339,355,75],[372,383,113],[394,416,119],[422,438,136],[455,471,97],[482,498,152],[504,526,53],[537,559,113],[565,581,97],[587,609,130],[620,642,130],[648,669,130],[680,692,136],[708,724,130],[730,753,130]];
const trendA = [[168,102],[444,102],[482,69],[614,135],[686,124],[752,141]];
const hoursB = [[162,173,129,1],[184,195,129,1],[201,212,129],[228,240,135],[251,272,129],[278,300,129],[311,333,129],[339,355,96],[361,383,113],[394,416,53],[422,438,151],[449,466,96],[482,498,135],[504,526,119],[537,548,113],[565,581,75],[587,609,75],[620,642,75],[648,669,124,1],[675,691,124,1],[708,724,124,1],[730,753,124,1]];
const trendB = [[168,146],[234,130],[306,141],[438,69],[471,107],[752,107]];

function spark(i) {
  const [hours, trend] = i % 2 ? [hoursB, trendB] : [hoursA, trendA];
  return `<svg class="spark" viewBox="160 46 600 111">` +
    hours.map(([l, r, t, q]) => `<rect class="${q ? 'g' : 'o'}" x="${l}" y="${t}" width="${r - l}" height="${157 - t}"/>`).join('') +
    `<polyline points="${trend.join(' ')}"/>` +
    trend.map(([x, y]) => `<circle cx="${x}" cy="${y}" r="5.500"/>`).join('') + `</svg>`;
}

const indent = { '474': 9, '941': 9, '19,033': 4, '1M-1M': 4, '21,550': 2, '32K-39K': 2 };

function render(name) {
  const cols = columns[name];
  const sort = id => `<svg><use href="#${id}"/></svg>`;
  const head = `<div class="head"><div>Rank${sort('sort')}</div><div>Website${sort('sort')}</div>` +
    cols.map(([t], i) => `<div><span class="${t.includes('<br>') ? 'two' : ''}">${t}</span>${sort(i ? 'sort-desc' : 'sort')}</div>`).join('') + `</div>`;
  const rows = sites.map(([icon, label], i) =>
    `<div class="row"><div class="rank">${i + 1}</div>` +
    `<div class="site"><svg class="${icon === 'mia' ? 'wide' : ''}"><use href="#${icon}"/></svg>${label}</div>` +
    cols.map(([, tone, values, shares]) => tone === 'spark'
      ? `<div>${spark(i)}</div>`
      : `<div class="cell ${tone}"><div class="bar"><i style="width:${shares[i]}%"></i></div><div class="num n${indent[values[i]] || 0}">${values[i]}</div></div>`
    ).join('') + `</div>`).join('');
  document.getElementById(name).innerHTML = head + rows;
}

render('performance');
render('demographics');
```
